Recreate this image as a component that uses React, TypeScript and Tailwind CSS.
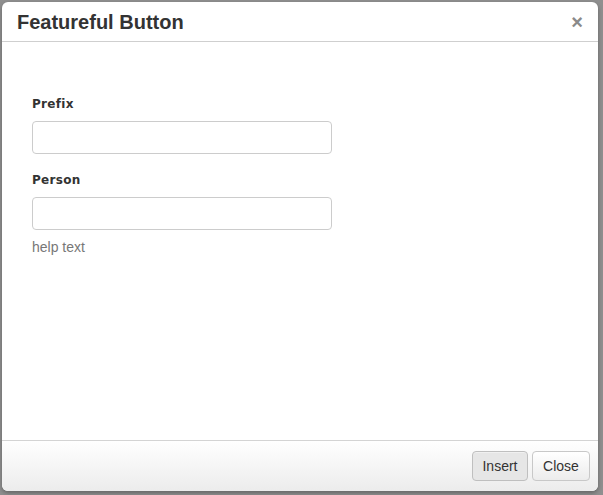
import React from "react";

export default function App() {
  return (
    <div className="w-[603px] h-[495px] bg-[#8f8f8f] pt-[2px] pl-[2px] overflow-hidden">
      <div className="w-[596px] h-[489px] bg-white rounded-[6px] flex flex-col overflow-hidden shadow-[0_2px_4px_rgba(0,0,0,0.3)]">
        {/* header */}
        <div className="h-[40px] shrink-0 border-b border-[#cfcfcf] flex items-center justify-between pl-[15px] pr-[15px]">
          <h3 className="font-['Liberation_Sans',Arial,sans-serif] font-bold text-[20px] leading-none text-[#333] mt-[1px]">
            Featureful Button
          </h3>
          <button className="font-['Liberation_Sans',Arial,sans-serif] font-bold text-[20px] leading-none text-[#8a8a8a] mt-[1px]">
            ×
          </button>
        </div>

        {/* body */}
        <div className="flex-1 pl-[30px] pt-[53px]">
          <div className="font-['DejaVu_Sans',sans-serif] font-bold text-[12px] leading-[18px] tracking-[0.3px] text-[#333] mb-[8px]">
            Prefix
          </div>
          <input className="block w-[300px] h-[33px] border border-[#cccccc] rounded-[4px] bg-white outline-none" />
          <div className="font-['DejaVu_Sans',sans-serif] font-bold text-[12px] leading-[18px] tracking-[0.3px] text-[#333] mt-[17px] mb-[8px]">
            Person
          </div>
          <input className="block w-[300px] h-[33px] border border-[#cccccc] rounded-[4px] bg-white outline-none" />
          <p className="font-['Liberation_Sans',Arial,sans-serif] text-[14px] leading-[20px] text-[#777] mt-[7px]">
            help text
          </p>
        </div>

        {/* footer */}
        <div className="h-[51px] shrink-0 border-t border-[#d4d4d4] bg-gradient-to-b from-white to-[#ececec] flex items-center justify-end gap-[4px] pr-[8px]">
          <button className="w-[56px] h-[30px] rounded-[4px] border border-[#bfbfbf] bg-[#e6e6e6] font-['Liberation_Sans',Arial,sans-serif] text-[14px] text-[#333] shadow-[inset_0_1px_0_rgba(255,255,255,0.4)]">
            Insert
          </button>
          <button className="w-[58px] h-[30px] rounded-[4px] border border-[#c8c8c8] bg-gradient-to-b from-white to-[#ececec] font-['Liberation_Sans',Arial,sans-serif] text-[14px] text-[#333]">
            Close
          </button>
        </div>
      </div>
    </div>
  );
}
